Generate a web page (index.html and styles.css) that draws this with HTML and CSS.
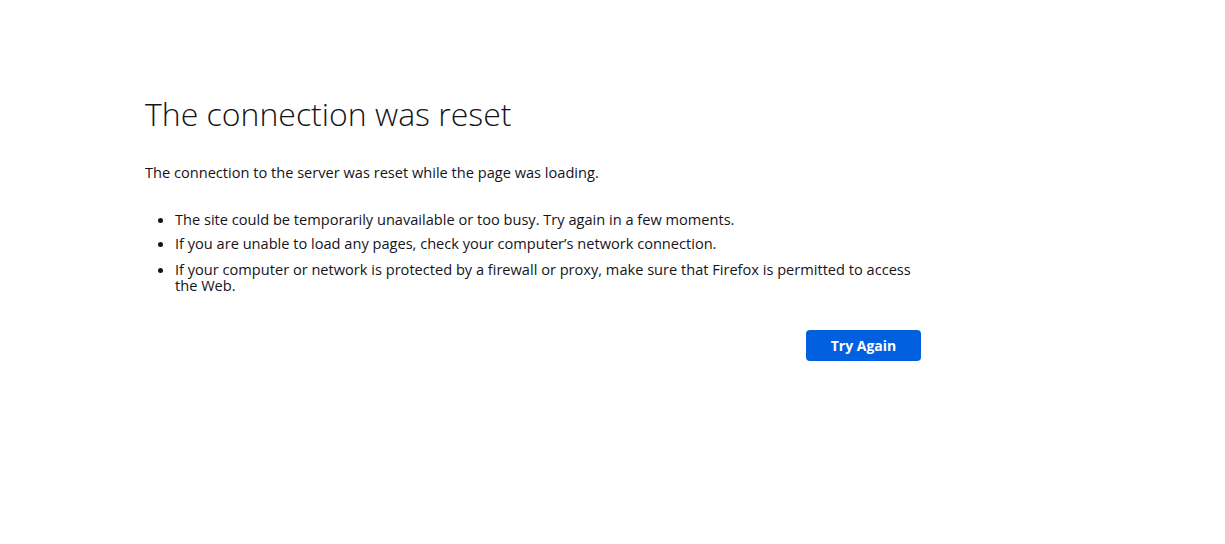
FILE: index.html
```html
<!DOCTYPE html>
<html lang="en">
<head>
<meta charset="utf-8">
<title>Problem loading page</title>
<link rel="stylesheet" href="styles.css">
</head>
<body>
<div class="container">
  <h1 class="title">The connection was reset</h1>
  <p class="desc">The connection to the server was reset while the page was loading.</p>
  <ul class="tips">
    <li>The site could be temporarily unavailable or too busy. Try again in a few moments.</li>
    <li>If you are unable to load any pages, check your computer’s network connection.</li>
    <li>If your computer or network is protected by a firewall or proxy, make sure that Firefox is permitted to access the Web.</li>
  </ul>
  <div class="actions">
    <button class="try-again">Try Again</button>
  </div>
</div>
</body>
</html>
```

FILE: styles.css
```css
html, body {
  margin: 0;
  padding: 0;
  background: #ffffff;
}
body {
  font-family: "Open Sans", "Noto Sans", sans-serif;
  font-size: 14.6px;
  color: #15141a;
}
.container {
  width: 776px;
  padding: 92px 0 0 145px;
}
.title {
  margin: 0;
  font-size: 32px;
  font-weight: 300;
  line-height: 44px;
  color: #15141a;
}
.desc {
  margin: 26px 0 0;
  line-height: 20px;
}
.tips {
  margin: 29px 0 0;
  padding-left: 30px;
  list-style: disc;
}
.tips li {
  line-height: 16px;
  margin-bottom: 8px;
}
.tips li:last-child {
  margin-top: 10px;
}
.actions {
  display: flex;
  justify-content: flex-end;
  margin-top: 37px;
}
.try-again {
  font-family: inherit;
  font-size: 14px;
  font-weight: 700;
  color: #ffffff;
  background: #0060df;
  border: none;
  border-radius: 4px;
  width: 115px;
  height: 31px;
  padding: 0;
}
```
